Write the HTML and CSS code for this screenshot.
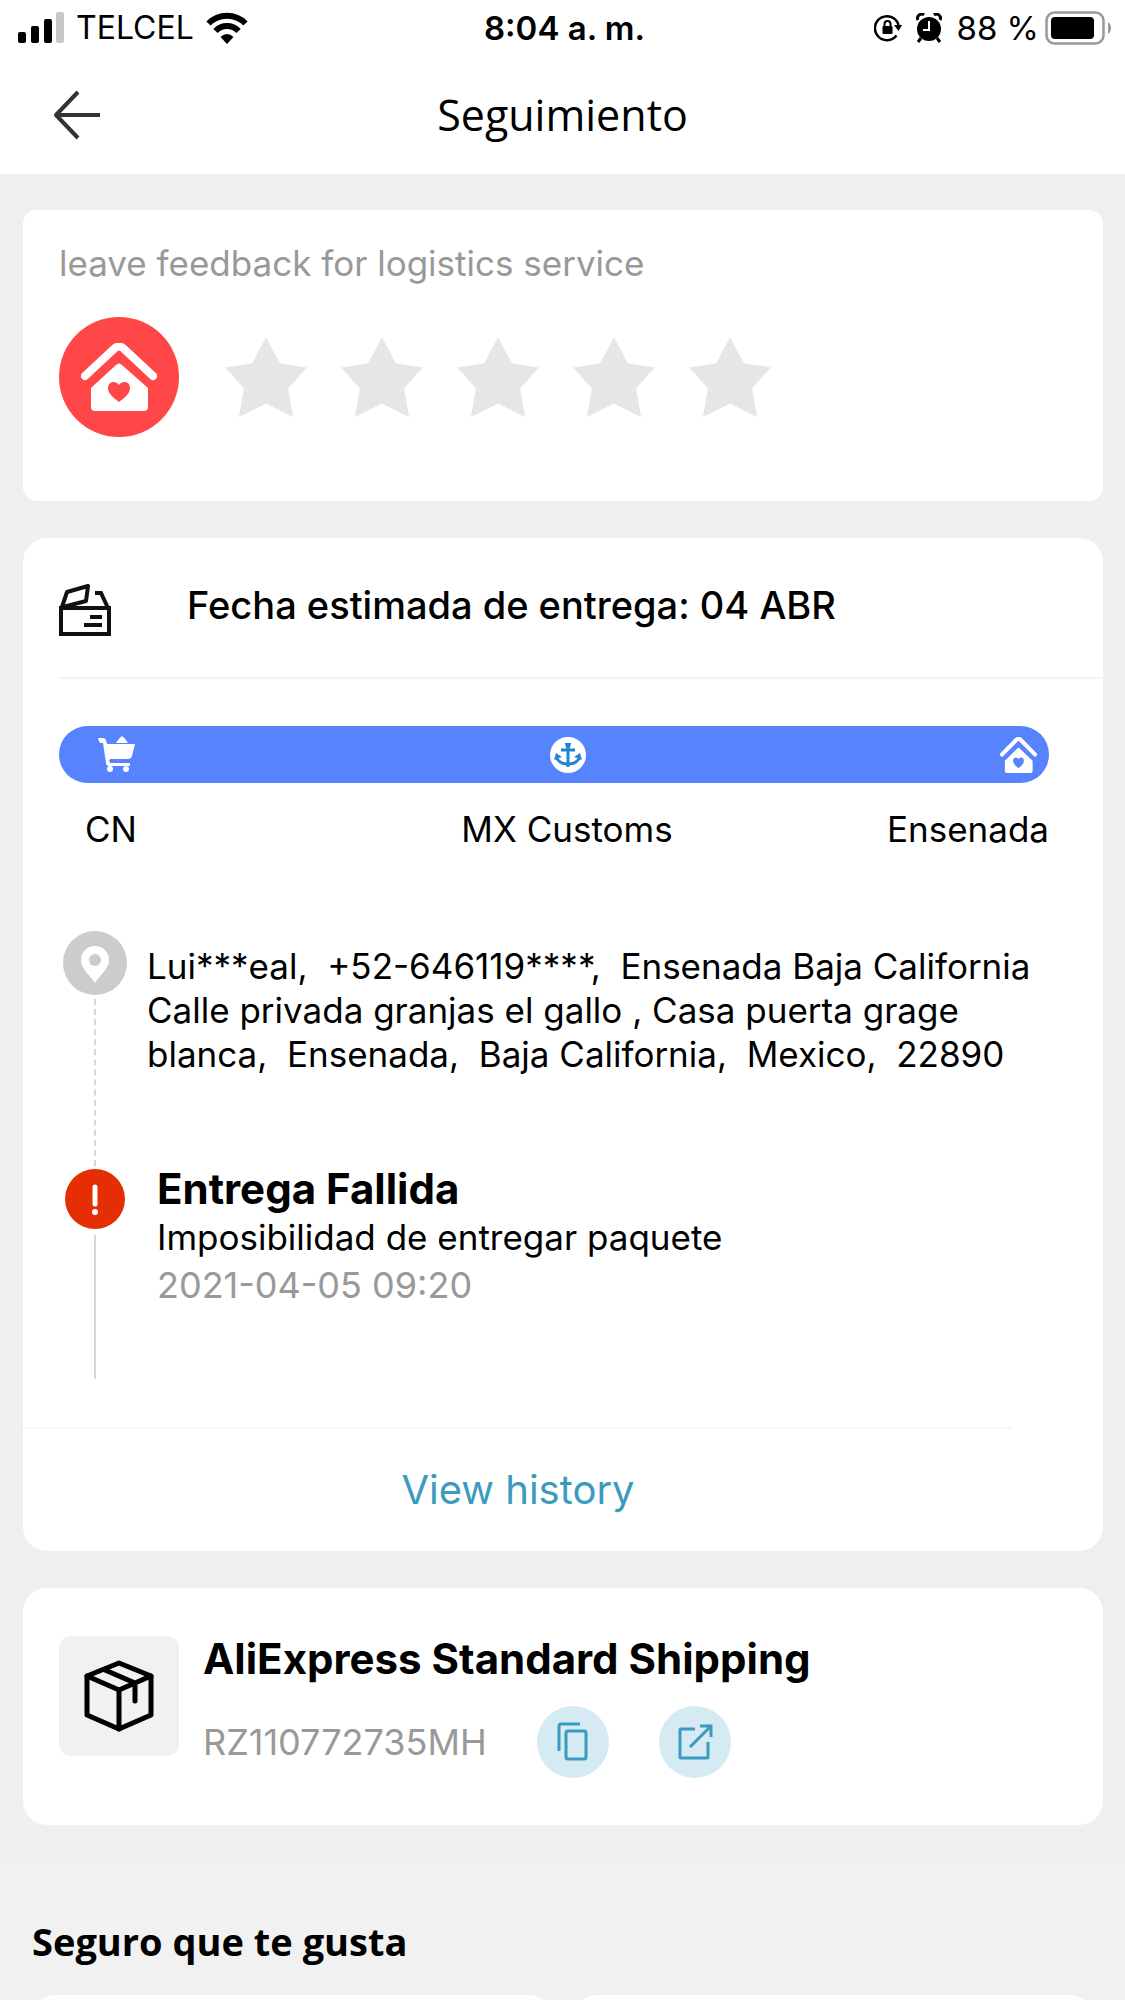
FILE: index.html
```html
<!DOCTYPE html>
<html lang="es">
<head>
<meta charset="utf-8">
<meta name="viewport" content="width=device-width, initial-scale=1">
<title>Seguimiento</title>
<link rel="stylesheet" href="styles.css">
</head>
<body>
<svg class="sprite" aria-hidden="true">
  <symbol id="house" viewBox="0 0 76 68" preserveAspectRatio="none">
    <path d="M4 33 L34 5 Q38 2 42 5 L72 33" fill="none" stroke="currentColor" stroke-width="8" stroke-linecap="round" stroke-linejoin="round"/>
    <path fill-rule="evenodd" fill="currentColor" d="M35 22 Q38 19 41 22 L67 45 V64 Q67 68 63 68 H14 Q10 68 10 64 V45 Z M38 59 C33 55 27 51 27 45 C27 38 35 37 38 42 C41 37 49 38 49 45 C49 51 43 55 38 59 Z"/>
  </symbol>
</svg>

<header class="top">
  <div class="status">
    <div class="status-left">
      <svg width="46" height="32" viewBox="0 0 46 32" aria-hidden="true">
        <rect x="0" y="20" width="8" height="11" rx="2"/>
        <rect x="13" y="14" width="8" height="17" rx="2"/>
        <rect x="26" y="7" width="8" height="24" rx="2"/>
        <rect x="38" y="0" width="8" height="31" rx="2" fill="#c8c8c8"/>
      </svg>
      <span class="carrier">TELCEL</span>
      <svg width="42" height="32" viewBox="0 0 42 32" aria-hidden="true">
        <g fill="none" stroke="#000" stroke-width="6">
          <path d="M2.500 11.500 A26 26 0 0 1 39.500 11.500"/>
          <path d="M9.500 19 A16 16 0 0 1 32.500 19"/>
        </g>
        <path d="M14.500 25 Q21 19 27.500 25 L21 32 Z"/>
      </svg>
    </div>
    <time class="clock">8:04 a. m.</time>
    <div class="status-right">
      <svg width="28" height="28" viewBox="0 0 28 28" aria-hidden="true">
        <path d="M22.500 21.500 A12 12 0 1 1 24.500 11" fill="none" stroke="#000" stroke-width="2.500"/>
        <path d="M20 11 H28 L24.500 17 Z"/>
        <rect x="8.500" y="12" width="10" height="8" rx="1"/>
        <path d="M10.500 12 V10 a3 3 0 0 1 6 0 V12" fill="none" stroke="#000" stroke-width="2"/>
      </svg>
      <svg width="26" height="30" viewBox="0 0 26 30" aria-hidden="true">
        <circle cx="13" cy="16" r="12"/>
        <path d="M2 7 A4 4 0 0 1 8 2 M24 7 A4 4 0 0 0 18 2" fill="none" stroke="#000" stroke-width="3"/>
        <path d="M5 25 L2 29 M21 25 L24 29" stroke="#000" stroke-width="3"/>
        <path d="M13 8 V17 H7" fill="none" stroke="#fff" stroke-width="2"/>
      </svg>
      <span class="level">88 %</span>
      <svg width="66" height="34" viewBox="0 0 66 34" aria-hidden="true">
        <rect x="1.500" y="1.500" width="57" height="31" rx="8" fill="none" stroke="#999" stroke-width="2.500"/>
        <rect x="6" y="6" width="43" height="22" rx="4"/>
        <path d="M63 11 Q66 13 66 17 Q66 21 63 23 Z" fill="#999"/>
      </svg>
    </div>
  </div>
  <nav class="nav">
    <button class="back" type="button" aria-label="Volver">
      <svg width="50" height="50" viewBox="0 0 50 50" fill="none" stroke="#333" stroke-width="4">
        <path d="M48 25 H4 M26 2 L4 25 L26 48" stroke-linejoin="round"/>
      </svg>
    </button>
    <h1 class="title">Seguimiento</h1>
  </nav>
</header>

<main class="main">
  <section class="card feedback">
    <p class="prompt" id="prompt">leave feedback for logistics service</p>
    <div class="rating">
      <span class="home-badge"><svg width="76" height="68" aria-hidden="true"><use href="#house"/></svg></span>
      <div class="stars" role="radiogroup" aria-labelledby="prompt">
        <input class="star" type="radio" name="rating" value="1" aria-label="1">
        <input class="star" type="radio" name="rating" value="2" aria-label="2">
        <input class="star" type="radio" name="rating" value="3" aria-label="3">
        <input class="star" type="radio" name="rating" value="4" aria-label="4">
        <input class="star" type="radio" name="rating" value="5" aria-label="5">
      </div>
    </div>
  </section>

  <section class="card tracking">
    <div class="estimate">
      <svg width="52" height="54" viewBox="0 0 52 54" fill="none" stroke="#111" stroke-width="4" aria-hidden="true">
        <path d="M2 25 H50 V51 H2 Z"/>
        <path d="M3 24 L8 9 L29 3 L27 18 L4 24" stroke-linejoin="round"/>
        <path d="M36 10 H42 L49 25"/>
        <path d="M31 34 H43 M25 42 H43"/>
      </svg>
      <h2 class="estimate-text">Fecha estimada de entrega: 04 ABR</h2>
    </div>

    <div class="route">
      <div class="bar">
        <svg width="38" height="37" viewBox="0 0 38 37" fill="#fff" aria-hidden="true">
          <path d="M0 2 H5 Q7 2 8 4 L9 8 H37 L34 20 Q33 23 30 23 H12 V24 H11 L12 27 H32 V30 H11 Q8 30 8 27 L5 7 H2 Q1 6 0 2 Z"/>
          <path d="M18 7 Q20 3 24 0 Q28 3 30 7 Z"/>
          <circle cx="12" cy="33" r="3"/><circle cx="28" cy="33" r="3"/>
        </svg>
        <svg width="36" height="36" viewBox="0 0 36 36" aria-hidden="true">
          <circle cx="18" cy="18" r="18" fill="#fff"/>
          <path d="M18 8 V30 M11 13 H25 M6 20 Q9 27 18 27 Q27 27 30 20" fill="none" stroke="#1d86d6" stroke-width="3"/>
          <path d="M4 23 L6 16 L12 20 Z M32 23 L30 16 L24 20 Z M15 6 H21 L20 11 H16 Z" fill="#1d86d6"/>
        </svg>
        <svg width="37" height="36" aria-hidden="true"><use href="#house"/></svg>
      </div>
      <div class="stops">
        <span>CN</span>
        <span>MX Customs</span>
        <span class="last">Ensenada</span>
      </div>
    </div>

    <ol class="timeline">
      <li class="event place">
        <div class="rail">
          <svg width="64" height="66" viewBox="0 0 64 66" aria-hidden="true">
            <circle cx="32" cy="33" r="32" fill="#ccc"/>
            <path d="M32 53 C27 45 18 39 18 30 A14 14 0 0 1 46 30 C46 39 37 45 32 53 Z" fill="#fff"/>
            <circle cx="32" cy="30" r="6" fill="#ccc"/>
          </svg>
          <span class="line dashed"></span>
        </div>
        <p class="address">Lui***eal,&nbsp; +52-646119****,&nbsp; Ensenada Baja California Calle privada granjas el gallo , Casa puerta grage blanca,&nbsp; Ensenada,&nbsp; Baja California,&nbsp; Mexico,&nbsp; 22890</p>
      </li>
      <li class="event">
        <div class="rail">
          <svg width="64" height="66" viewBox="0 0 64 66" aria-hidden="true">
            <circle cx="32" cy="33" r="30" fill="#e62e04"/>
            <path d="M32 21 V38" stroke="#fff" stroke-width="5" stroke-linecap="round"/>
            <circle cx="32" cy="46" r="3" fill="#fff"/>
          </svg>
          <span class="line"></span>
        </div>
        <div class="detail">
          <h3 class="heading">Entrega Fallida</h3>
          <p class="body">Imposibilidad de entregar paquete</p>
          <time class="body muted">2021-04-05 09:20</time>
        </div>
      </li>
    </ol>

    <button class="history" type="button">View history</button>
  </section>

  <section class="card carrier-card">
    <span class="tile">
      <svg width="72" height="72" viewBox="0 0 72 72" fill="none" stroke="#000" stroke-width="5" stroke-linejoin="round" stroke-linecap="round" aria-hidden="true">
        <path d="M36 3 L68 16 V55 L36 69 L4 55 V16 Z"/>
        <path d="M4 16 L36 30 L68 16 M36 30 V69 M22 10 L52 23 V41"/>
      </svg>
    </span>
    <div class="shipping">
      <h2 class="heading">AliExpress Standard Shipping</h2>
      <div class="code-row">
        <span class="body muted">RZ110772735MH</span>
        <button class="round" type="button" aria-label="Copiar">
          <svg width="32" height="40" viewBox="0 0 32 40" fill="none" stroke="#3a9bbd" stroke-width="3">
            <path d="M2 29 V4 Q2 2 4 2 H23"/><rect x="9" y="9" width="20" height="28" rx="2"/>
          </svg>
        </button>
        <button class="round" type="button" aria-label="Abrir">
          <svg width="36" height="36" viewBox="0 0 36 36" fill="none" stroke="#3a9bbd" stroke-width="3">
            <path d="M18 5 H4 Q3 5 3 6 V33 Q3 34 4 34 H30 Q31 34 31 33 V18"/>
            <path d="M13 23 L33 3 M23 2 H34 V13"/>
          </svg>
        </button>
      </div>
    </div>
  </section>
</main>

<section class="more">
  <h2 class="more-title">Seguro que te gusta</h2>
  <div class="products">
    <div class="product"></div>
    <div class="product"></div>
  </div>
</section>
</body>
</html>
```
FILE: styles.css
```css
* { box-sizing: border-box; margin: 0; }

body {
  min-height: 100vh;
  display: flex;
  flex-direction: column;
  background: #efefef;
  color: #000;
  font-family: Inter, "Liberation Sans", sans-serif;
  font-size: 35px;
  line-height: 44px;
}

button {
  padding: 0;
  border: 0;
  background: none;
  font: inherit;
  cursor: pointer;
}

svg { display: block; flex: none; }

.sprite { position: absolute; width: 0; height: 0; }

.top { background: #fff; }

.status {
  display: grid;
  grid-template-columns: 1fr auto 1fr;
  align-items: center;
  height: 56px;
  padding: 0 14px 0 18px;
  font-size: 32px;
}

.status-left, .status-right { display: flex; align-items: center; }
.status-left { gap: 12px; }
.status-right { justify-content: flex-end; gap: 14px; }
.status-right svg:last-child { margin-left: -8px; }
.clock { font-size: 33px; font-weight: 600; }
.level { font-size: 33px; }

.nav {
  display: grid;
  grid-template-columns: 1fr auto 1fr;
  align-items: center;
  height: 118px;
  padding: 0 52px;
}

.back { justify-self: start; }

.title {
  font-family: "Open Sans", sans-serif;
  font-size: 43px;
  font-weight: 400;
}

.main {
  display: flex;
  flex-direction: column;
  gap: 37px;
  padding: 36px 22px 36px 23px;
}

.card { background: #fff; border-radius: 24px; }

.feedback {
  border-radius: 14px;
  padding: 31px 36px 64px;
}

.prompt { color: #999; }

.rating {
  display: flex;
  align-items: center;
  gap: 46px;
  margin-top: 32px;
}

.home-badge {
  display: grid;
  place-items: center;
  width: 120px;
  height: 120px;
  border-radius: 50%;
  background: #ff4747;
  color: #fff;
}

.stars { display: flex; gap: 34px; }

.star {
  appearance: none;
  width: 82px;
  height: 80px;
  background: #e5e6e6;
  clip-path: polygon(50% 0, 67% 33%, 100% 38%, 77% 64%, 83% 100%, 50% 83%, 17% 100%, 23% 64%, 0 38%, 33% 33%);
  cursor: pointer;
}
.star:checked { background: #ffb400; }

.tracking { overflow: hidden; }

.estimate {
  display: flex;
  align-items: flex-start;
  gap: 76px;
  margin-left: 36px;
  padding: 45px 0 40px;
  border-bottom: 2px solid #f4f4f4;
}

.estimate-text { font-size: 38px; font-weight: 500; }

.route { margin: 47px 54px 0 36px; }

.bar {
  display: flex;
  align-items: center;
  justify-content: space-between;
  height: 57px;
  padding: 0 12px 0 39px;
  border-radius: 29px;
  background: #5783ff;
  color: #fff;
}

.stops {
  display: grid;
  grid-template-columns: 1fr auto 1fr;
  margin-top: 24px;
  padding-left: 26px;
}
.last { text-align: right; }

.timeline {
  margin: 79px 60px 48px 40px;
  padding: 0;
  list-style: none;
}

.event { display: flex; gap: 30px; min-height: 213px; }
.place { gap: 20px; min-height: 236px; }

.rail {
  display: flex;
  flex: none;
  flex-direction: column;
  align-items: center;
  gap: 3px;
}

.line { flex: 1; border-left: 2px solid #d8d8d8; }
.dashed { border-left-style: dashed; }

.address { padding-top: 14px; }

.heading { font-size: 42px; font-weight: 700; line-height: 46px; }
.body { display: block; line-height: 46px; }
.detail .body:first-of-type { margin-top: 2px; }
.muted { color: #999; font-size: 36px; }

.history {
  display: block;
  width: calc(100% - 90px);
  height: 124px;
  border-top: 2px solid #f7f7f7;
  color: #3a9bbd;
  font-size: 40px;
}

.carrier-card {
  display: flex;
  align-items: flex-start;
  gap: 24px;
  padding: 48px 36px 47px;
}

.tile {
  display: grid;
  flex: none;
  place-items: center;
  width: 120px;
  height: 120px;
  border-radius: 12px;
  background: #f1f1f1;
}

.code-row {
  display: flex;
  align-items: center;
  gap: 50px;
  margin-top: 24px;
}

.round {
  display: grid;
  place-items: center;
  width: 72px;
  height: 72px;
  border-radius: 50%;
  background: #d5eaf3;
}

.more {
  display: flex;
  flex: 1;
  flex-direction: column;
  padding: 56px 32px 0;
  background: #f1f1f1;
}

.more-title {
  font-family: "Open Sans", sans-serif;
  font-size: 38px;
  font-weight: 700;
  line-height: 48px;
}

.products {
  display: grid;
  flex: 1 1 0;
  grid-template-columns: 1fr 1fr;
  gap: 20px;
  min-height: 4px;
  margin-top: 30px;
  overflow: hidden;
}

.product {
  height: 240px;
  border-radius: 24px;
  background: #fff;
}
```
